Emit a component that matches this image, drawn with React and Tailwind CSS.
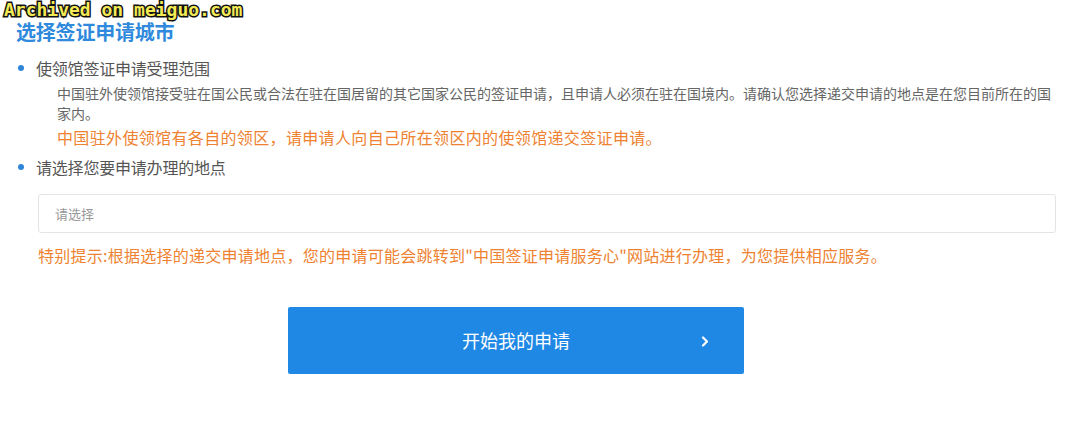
import React from "react";

const Bullet = ({ children }) => (
  <div className="flex items-center h-6 text-[16px] text-[#555]">
    <span className="w-[6px] h-[6px] rounded-full bg-[#2f86d8] ml-[2px] mr-[12px]" />
    <span className="tracking-[-0.2px]">{children}</span>
  </div>
);

const App = () => {
  return (
    <div className="relative w-[1080px] h-[440px] bg-white font-['Microsoft_YaHei','Noto_Sans_CJK_SC',sans-serif]">
      <div className="absolute left-[4px] top-0 font-['DejaVu_Sans_Mono',monospace] font-bold text-[18px] leading-5 text-[#f3ea55] [-webkit-text-stroke:3px_#111] [paint-order:stroke_fill] whitespace-pre">
        Archived on meiguo.com
      </div>

      <div className="pl-4 pr-6 pt-[18px]">
        <h2 className="text-[20px] leading-7 font-bold text-[#2f89dc] tracking-[-0.2px]">
          选择签证申请城市
        </h2>

        <div className="mt-[10px]">
          <Bullet>使领馆签证申请受理范围</Bullet>
          <p className="mt-[3px] pl-[41px] text-[14px] leading-5 text-[#666]">
            中国驻外使领馆接受驻在国公民或合法在驻在国居留的其它国家公民的签证申请，且申请人必须在驻在国境内。请确认您选择递交申请的地点是在您目前所在的国家内。
          </p>
          <p className="mt-[2px] pl-[41px] text-[16px] leading-6 text-[#ee8230] tracking-[0.35px]">
            中国驻外使领馆有各自的领区，请申请人向自己所在领区内的使领馆递交签证申请。
          </p>
          <div className="mt-[6px]">
            <Bullet>请选择您要申请办理的地点</Bullet>
          </div>
        </div>

        <div className="mt-[15px] ml-[22px] h-[39px] flex items-center px-4 border border-[#e4e4e4] rounded-[3px] text-[13px] text-[#999]">
          请选择
        </div>

        <p className="mt-[10px] ml-[22px] text-[16px] leading-6 text-[#ee8230] tracking-[0.25px]">
          特别提示:根据选择的递交申请地点，您的申请可能会跳转到"中国签证申请服务心"网站进行办理，为您提供相应服务。
        </p>

        <button className="mt-[40px] ml-[272px] w-[456px] h-[67px] rounded-[2px] bg-[#1f88e4] text-white text-[18px] flex items-center relative">
          <span className="flex-1 text-center">开始我的申请</span>
          <svg
            className="absolute left-[413px] top-[29px]"
            width="8"
            height="11"
            viewBox="0 0 8 11"
            fill="none"
            stroke="white"
            strokeWidth="2.2"
            strokeLinecap="round"
            strokeLinejoin="round"
          >
            <path d="M2 1.5 L6 5.5 L2 9.5" />
          </svg>
        </button>
      </div>
    </div>
  );
};

export default App;
